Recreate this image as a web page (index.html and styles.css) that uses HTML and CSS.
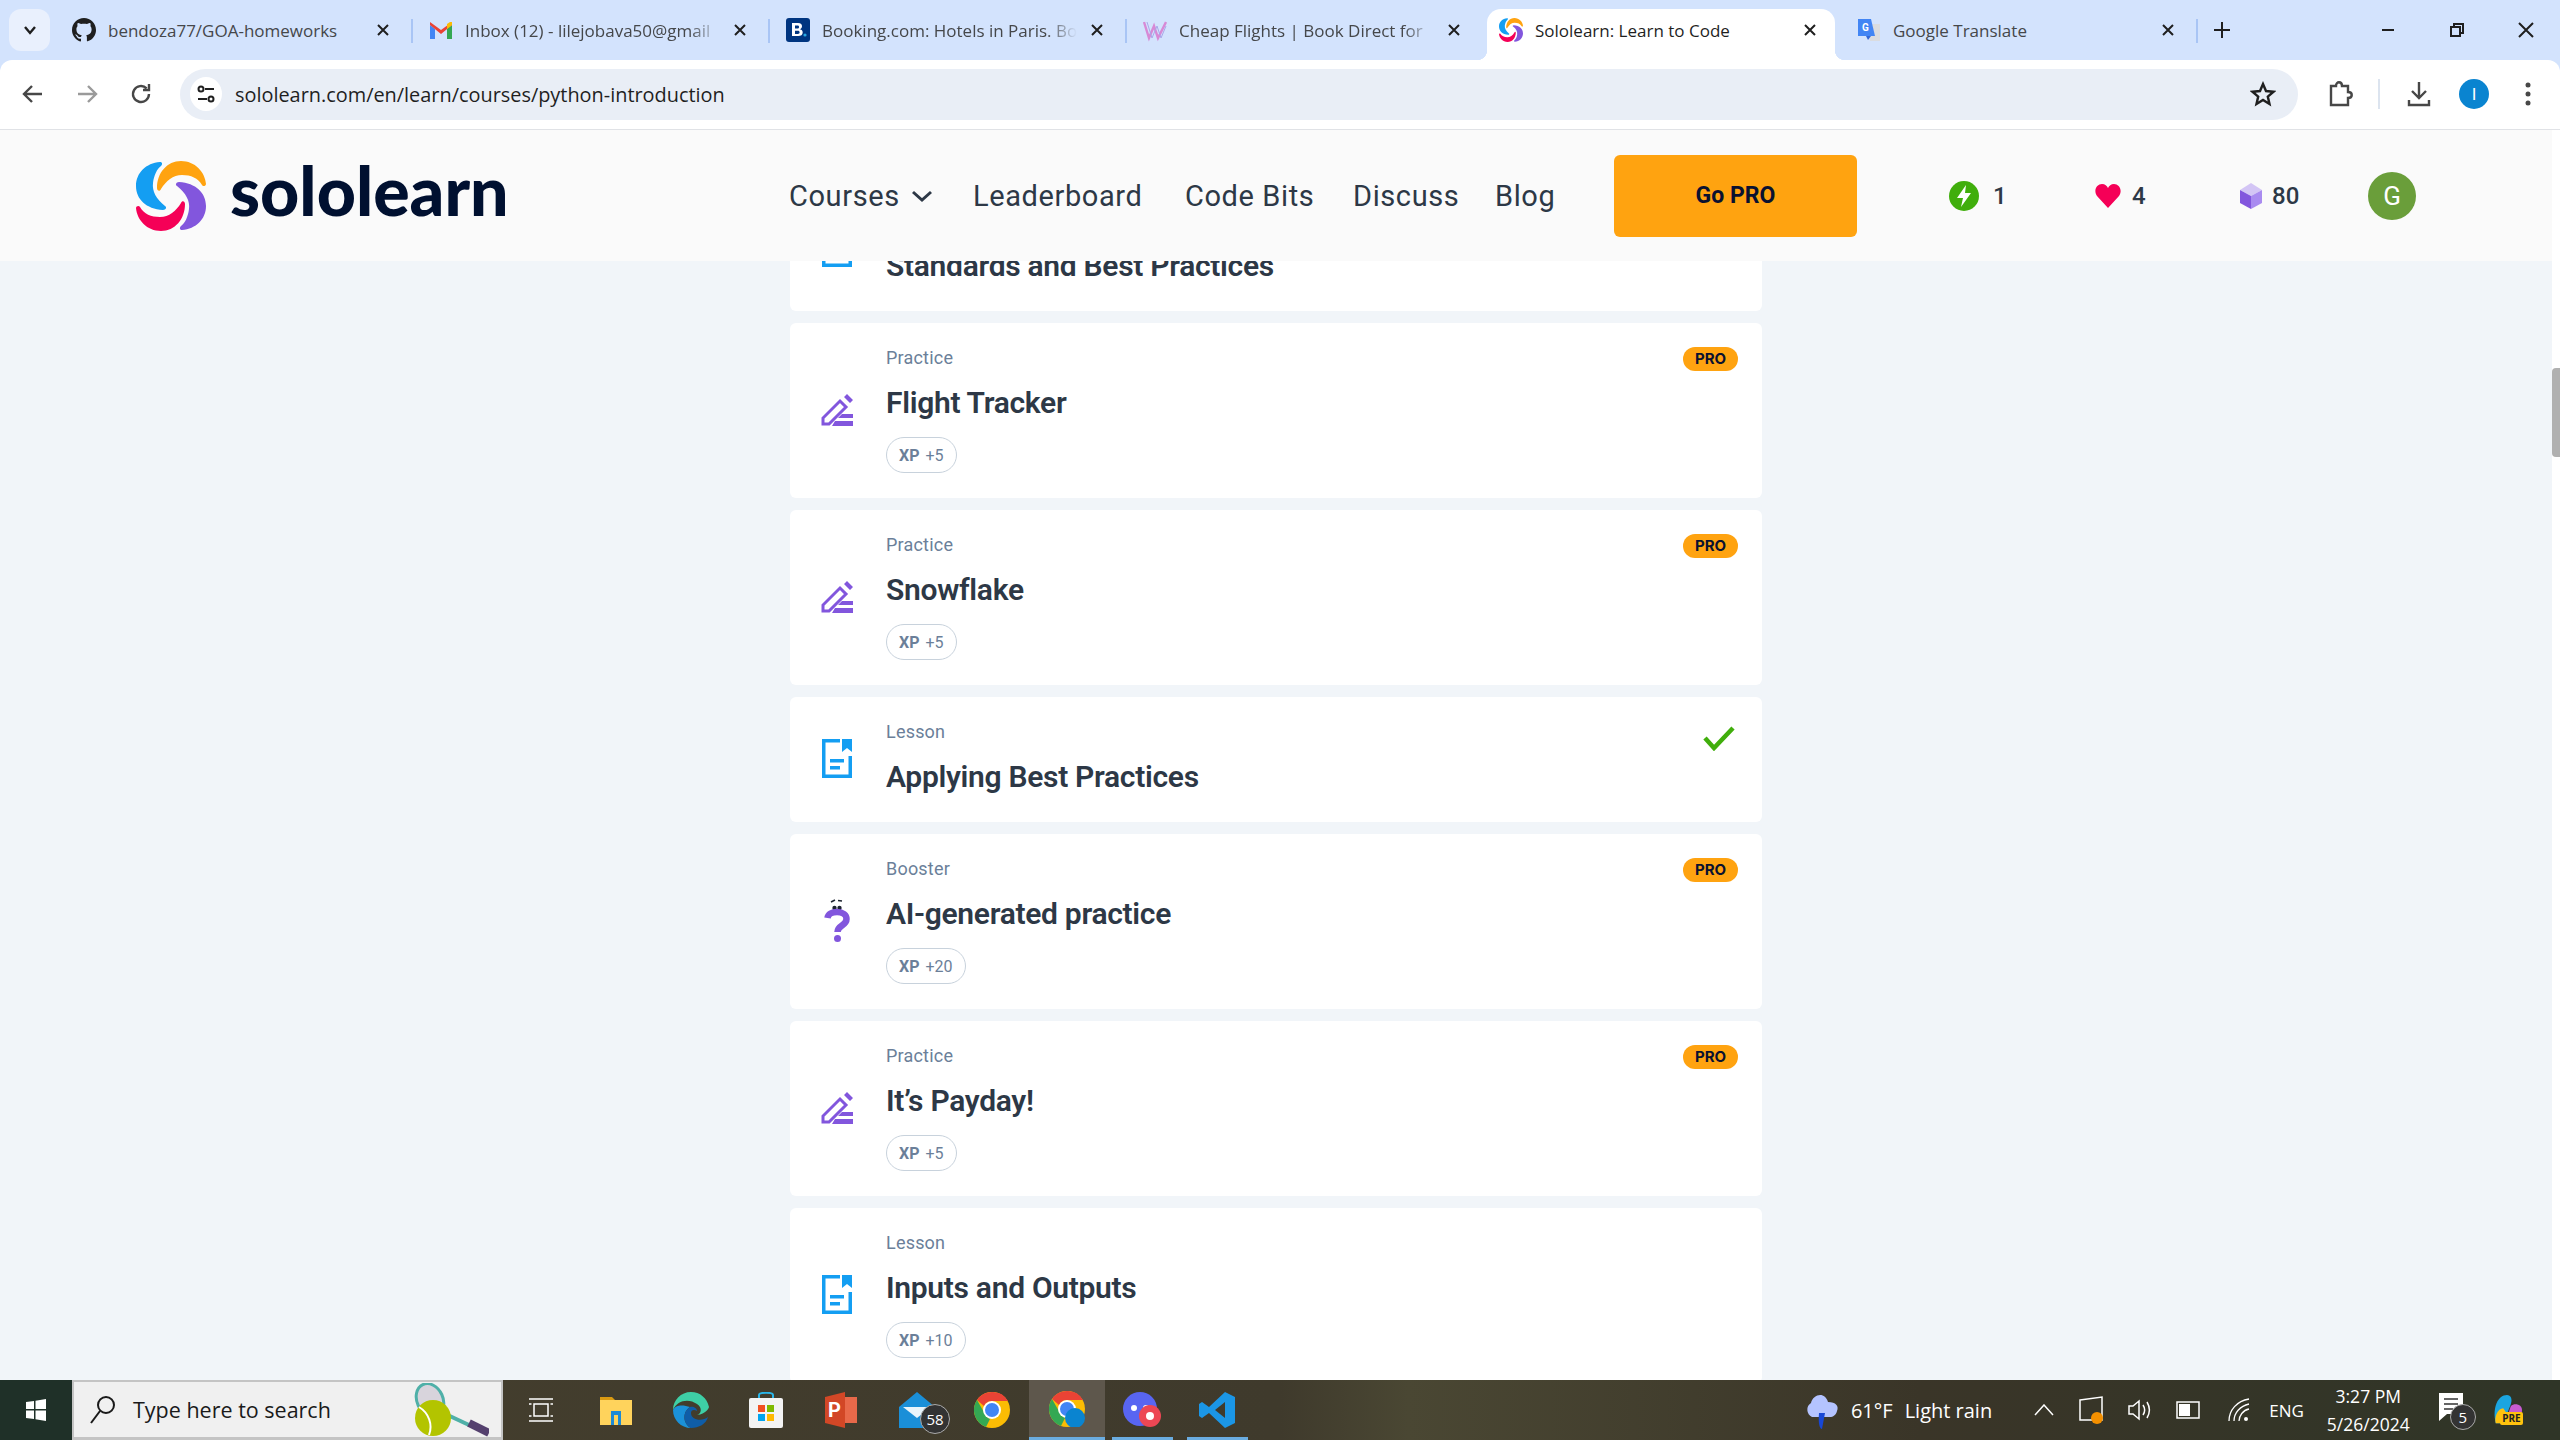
FILE: index.html
```html
<!DOCTYPE html>
<html>
<head>
    <title>Sololearn: Learn to Code</title>
    <link rel="stylesheet" href="styles.css">
</head>
<body>
    <svg class="defs" width="0" height="0">
        <symbol id="logo" viewBox="0 0 70 70">
            <path fill="#149ef2" d="M24 1C10 2 0 12 0 25C0 38 10 48 27 49C30 49 31 46 29 45C20 38 16 30 17 22C18 14 21 8 25 5C27 3 26 1 24 1Z"/>
            <path fill="#ffa310" d="M21 27C21 12 31 0 45 0C59 0 69 11 70 23C70 25 67 26 66 24C62 17 55 14 46 14C37 14 30 20 25 28C24 31 21 30 21 27Z"/>
            <g transform="rotate(180 35 35)">
                <path fill="#8256dd" d="M24 1C10 2 0 12 0 25C0 38 10 48 27 49C30 49 31 46 29 45C20 38 16 30 17 22C18 14 21 8 25 5C27 3 26 1 24 1Z"/>
                <path fill="#f50057" d="M21 27C21 12 31 0 45 0C59 0 69 11 70 23C70 25 67 26 66 24C62 17 55 14 46 14C37 14 30 20 25 28C24 31 21 30 21 27Z"/>
            </g>
        </symbol>
        <symbol id="close" viewBox="0 0 16 16">
            <path d="M3 3L13 13M13 3L3 13" stroke="#1f1f1f" stroke-width="2" fill="none"/>
        </symbol>
        <symbol id="lesson" viewBox="0 0 30 39">
            <path fill="#149ef2" d="M0 0H18V3.500H3.500V35.500H26.500V17H30V39H0Z"/>
            <path fill="#149ef2" d="M20 0H30V13L25 9L20 13Z"/>
            <path fill="#149ef2" d="M8 20H22V23.500H8ZM8 27H18V30.500H8Z"/>
        </symbol>
        <symbol id="pencil" viewBox="0 0 32 32">
            <path fill="none" stroke="#8256dd" stroke-width="3" d="M2 30V24L19 7L25 13L8 30Z"/>
            <path fill="#8256dd" d="M23 3L26 0L32 6L29 9ZM14 27H32V32H11ZM21 20H32V24H17Z"/>
        </symbol>
    </svg>

    <div class="tabstrip">
        <div class="tab-search">
            <svg width="14" height="14" viewBox="0 0 14 14"><path d="M2 4L7 10L12 4" stroke="#1f1f1f" stroke-width="2.400" fill="none"/></svg>
        </div>
        <div class="tab">
            <svg class="tab-icon" viewBox="0 0 24 24"><path fill="#1f1f1f" d="M12 0C5.400 0 0 5.400 0 12c0 5.300 3.400 9.800 8.200 11.400.6.1.8-.3.8-.6v-2.100c-3.300.7-4-1.600-4-1.600-.5-1.400-1.300-1.800-1.300-1.800-1.100-.7.1-.7.1-.7 1.200.1 1.800 1.200 1.800 1.200 1.100 1.800 2.800 1.300 3.500 1 .1-.8.4-1.300.8-1.600-2.700-.3-5.500-1.300-5.500-5.900 0-1.300.5-2.400 1.200-3.200-.1-.3-.5-1.500.1-3.200 0 0 1-.3 3.300 1.200 1-.3 2-.4 3-.4s2 .1 3 .4c2.300-1.500 3.300-1.200 3.300-1.200.6 1.700.2 2.900.1 3.200.8.8 1.200 1.900 1.200 3.200 0 4.600-2.800 5.600-5.500 5.900.4.400.8 1.100.8 2.200v3.300c0 .3.2.7.8.6C20.600 21.800 24 17.300 24 12 24 5.400 18.600 0 12 0Z"/></svg>
            <span class="tab-title">bendoza77/GOA-homeworks</span>
            <svg class="tab-close"><use href="#close"/></svg>
        </div>
        <div class="tab">
            <svg class="tab-icon" viewBox="0 0 24 24">
                <path fill="#4285f4" d="M1 21V7l5 4v10Z"/>
                <path fill="#34a853" d="M18 21V11l5-4v14Z"/>
                <path fill="#ea4335" d="M1 7V4l11 8 11-8v3l-11 9Z"/>
                <path fill="#fbbc04" d="M18 6l3-2 2 0v3l-5 4Z"/>
            </svg>
            <span class="tab-title tab-title-fade">Inbox (12) - lilejobava50@gmail</span>
            <svg class="tab-close"><use href="#close"/></svg>
        </div>
        <div class="tab">
            <svg class="tab-icon" viewBox="0 0 24 24">
                <rect width="24" height="24" rx="3" fill="#003580"/>
                <path fill="#fff" d="M6 5h6c3 0 4 1.500 4 3.300 0 1.500-.8 2.500-2 2.900 1.700.4 2.700 1.500 2.700 3.300 0 2.500-1.800 3.500-4.500 3.500H6Zm3 2.400v3h2.500c1.100 0 1.600-.6 1.600-1.500s-.5-1.500-1.600-1.500Zm0 5.300v3.300h2.800c1.300 0 1.800-.7 1.800-1.700s-.6-1.600-1.800-1.600Z"/>
                <circle cx="19" cy="17" r="1.600" fill="#2aa7e0"/>
            </svg>
            <span class="tab-title tab-title-fade">Booking.com: Hotels in Paris. Bo</span>
            <svg class="tab-close"><use href="#close"/></svg>
        </div>
        <div class="tab tab-before-active">
            <svg class="tab-icon" viewBox="0 0 24 24"><path d="M1 4l5 16 5-12 4 12 8-16" fill="none" stroke="#d78ad6" stroke-width="2.400"/><path d="M4 4l5 16 5-12 4 12 5-12" fill="none" stroke="#a9a7ea" stroke-width="1"/></svg>
            <span class="tab-title tab-title-fade">Cheap Flights | Book Direct for</span>
            <svg class="tab-close"><use href="#close"/></svg>
        </div>
        <div class="tab tab-active">
            <svg class="tab-icon"><use href="#logo"/></svg>
            <span class="tab-title">Sololearn: Learn to Code</span>
            <svg class="tab-close"><use href="#close"/></svg>
        </div>
        <div class="tab">
            <svg class="tab-icon" viewBox="0 0 24 24">
                <path fill="#dadce0" d="M9 6h14v17H13Z"/>
                <path fill="#4285f4" d="M1 1h13l4 17H1Z"/>
                <path fill="#3367d6" d="M9 18h5l-3 4Z"/>
                <text x="5" y="13" class="tab-g">G</text>
            </svg>
            <span class="tab-title">Google Translate</span>
            <svg class="tab-close"><use href="#close"/></svg>
        </div>
        <svg class="tab-plus" viewBox="0 0 18 18"><path d="M9 1V17M1 9H17" stroke="#1f1f1f" stroke-width="2"/></svg>
        <div class="window-btns">
            <div class="window-btn"><svg width="16" height="16" viewBox="0 0 16 16"><path d="M2 8H14" stroke="#1f1f1f" stroke-width="2"/></svg></div>
            <div class="window-btn"><svg width="16" height="16" viewBox="0 0 16 16"><path d="M2 5H11V14H2ZM5 5V2H14V11H11" fill="none" stroke="#1f1f1f" stroke-width="2"/></svg></div>
            <div class="window-btn"><svg width="18" height="18" viewBox="0 0 18 18"><path d="M2 2L16 16M16 2L2 16" stroke="#1f1f1f" stroke-width="2" fill="none"/></svg></div>
        </div>
    </div>

    <div class="toolbar">
        <div class="tool-btn"><svg width="24" height="24" viewBox="0 0 24 24"><path d="M21 12H4M11 4L3 12L11 20" fill="none" stroke="#474747" stroke-width="2.400"/></svg></div>
        <div class="tool-btn"><svg width="24" height="24" viewBox="0 0 24 24"><path d="M3 12H20M13 4L21 12L13 20" fill="none" stroke="#9a9a9a" stroke-width="2.400"/></svg></div>
        <div class="tool-btn"><svg width="24" height="24" viewBox="0 0 24 24"><path d="M20 12A8 8 0 1 1 17.600 6.300M20 2V8H14" fill="none" stroke="#474747" stroke-width="2.400"/></svg></div>
        <div class="omnibox">
            <div class="site-pill"><svg width="20" height="20" viewBox="0 0 20 20"><path d="M9 5H18M2 15H11" stroke="#1f1f1f" stroke-width="2"/><circle cx="5" cy="5" r="2.500" fill="none" stroke="#1f1f1f" stroke-width="2"/><circle cx="15" cy="15" r="2.500" fill="none" stroke="#1f1f1f" stroke-width="2"/></svg></div>
            <span class="url">sololearn.com/en/learn/courses/python-introduction</span>
            <svg class="star" width="26" height="26" viewBox="0 0 26 26"><path d="M13 3L16 10L23.500 10.700L17.800 15.600L19.500 23L13 19L6.500 23L8.200 15.600L2.500 10.700L10 10Z" fill="none" stroke="#1f1f1f" stroke-width="2.400"/></svg>
        </div>
        <div class="tool-right">
            <svg class="tool-ext" width="26" height="28" viewBox="0 0 26 28"><path d="M4 6H9C9 1 15 1 15 6H21V12C26 12 26 18 21 18V25H4Z" fill="none" stroke="#474747" stroke-width="2.400"/></svg>
            <span class="tool-sep"></span>
            <svg class="tool-dl" width="26" height="28" viewBox="0 0 26 28"><path d="M13 2V18M6 11L13 18L20 11M3 20V25H23V20" fill="none" stroke="#474747" stroke-width="2.400"/></svg>
            <span class="profile">I</span>
            <svg class="tool-dots" width="6" height="26" viewBox="0 0 6 26"><circle cx="3" cy="4" r="2.500" fill="#474747"/><circle cx="3" cy="13" r="2.500" fill="#474747"/><circle cx="3" cy="22" r="2.500" fill="#474747"/></svg>
        </div>
    </div>

    <div class="viewport">
        <div class="site">
            <header class="nav">
                <div class="brand">
                    <svg class="brand-logo"><use href="#logo"/></svg>
                    <span class="brand-name">sololearn</span>
                </div>
                <nav class="nav-links">
                    <a class="nav-link">Courses
                        <svg class="nav-caret" width="22" height="14" viewBox="0 0 22 14"><path d="M2 3L11 11L20 3" fill="none" stroke="#2d3846" stroke-width="3"/></svg>
                    </a>
                    <a class="nav-link">Leaderboard</a>
                    <a class="nav-link">Code Bits</a>
                    <a class="nav-link">Discuss</a>
                    <a class="nav-link">Blog</a>
                </nav>
                <button class="go-pro">Go PRO</button>
                <div class="stat stat-streak">
                    <svg width="30" height="30" viewBox="0 0 30 30"><circle cx="15" cy="15" r="15" fill="#40ae0c"/><path d="M17 4L8 17H14L12 26L22 12H16Z" fill="#fff"/></svg>
                    <span>1</span>
                </div>
                <div class="stat stat-hearts">
                    <svg width="26" height="24" viewBox="0 0 26 24"><path d="M13 24L2 12C-2 6 2 0 7 0C10 0 12 2 13 4C14 2 16 0 19 0C24 0 28 6 24 12Z" fill="#f50057"/></svg>
                    <span>4</span>
                </div>
                <div class="stat stat-gems">
                    <svg width="22" height="26" viewBox="0 0 22 26"><path d="M11 0L22 7L11 13L0 7Z" fill="#d3c5f5"/><path d="M0 7L11 13V26L0 20Z" fill="#8256dd"/><path d="M22 7L11 13V26L22 20Z" fill="#a98bf0"/></svg>
                    <span>80</span>
                </div>
                <div class="avatar">G</div>
            </header>

            <main class="page">
                <div class="card-list">
                    <div class="card card-short">
                        <div class="card-icon"><svg width="30" height="39"><use href="#lesson"/></svg></div>
                        <div class="card-body">
                            <div class="card-kind">Lesson</div>
                            <div class="card-title">Standards and Best Practices</div>
                        </div>
                    </div>
                    <div class="card">
                        <div class="card-icon"><svg width="32" height="32"><use href="#pencil"/></svg></div>
                        <div class="card-body">
                            <div class="card-kind">Practice</div>
                            <div class="card-title">Flight Tracker</div>
                            <span class="chip"><b>XP</b> +5</span>
                        </div>
                        <span class="pro-badge">PRO</span>
                    </div>
                    <div class="card">
                        <div class="card-icon"><svg width="32" height="32"><use href="#pencil"/></svg></div>
                        <div class="card-body">
                            <div class="card-kind">Practice</div>
                            <div class="card-title">Snowflake</div>
                            <span class="chip"><b>XP</b> +5</span>
                        </div>
                        <span class="pro-badge">PRO</span>
                    </div>
                    <div class="card card-short">
                        <div class="card-icon"><svg width="30" height="39"><use href="#lesson"/></svg></div>
                        <div class="card-body">
                            <div class="card-kind">Lesson</div>
                            <div class="card-title">Applying Best Practices</div>
                        </div>
                        <svg class="card-check" width="32" height="26" viewBox="0 0 32 26"><path d="M2 13L11 23L30 3" fill="none" stroke="#40ae0c" stroke-width="4.500"/></svg>
                    </div>
                    <div class="card">
                        <div class="card-icon">
                            <svg width="26" height="43" viewBox="0 0 26 43">
                                <path d="M7 3L11 1M14 1.500L18 2" stroke="#1c2430" stroke-width="1.600"/>
                                <circle cx="10.500" cy="9" r="2.200" fill="#1c2430"/><circle cx="15.500" cy="9" r="2.200" fill="#1c2430"/>
                                <path d="M3.500 19C4 15 8 13 13 13C19 13 22.500 16 22.500 20C22.500 27 13.500 26 13.500 33" fill="none" stroke="#8256dd" stroke-width="6.500"/>
                                <circle cx="13.500" cy="39.500" r="3.500" fill="#8256dd"/>
                            </svg>
                        </div>
                        <div class="card-body">
                            <div class="card-kind">Booster</div>
                            <div class="card-title">AI-generated practice</div>
                            <span class="chip"><b>XP</b> +20</span>
                        </div>
                        <span class="pro-badge">PRO</span>
                    </div>
                    <div class="card">
                        <div class="card-icon"><svg width="32" height="32"><use href="#pencil"/></svg></div>
                        <div class="card-body">
                            <div class="card-kind">Practice</div>
                            <div class="card-title">It’s Payday!</div>
                            <span class="chip"><b>XP</b> +5</span>
                        </div>
                        <span class="pro-badge">PRO</span>
                    </div>
                    <div class="card">
                        <div class="card-icon"><svg width="30" height="39"><use href="#lesson"/></svg></div>
                        <div class="card-body">
                            <div class="card-kind">Lesson</div>
                            <div class="card-title">Inputs and Outputs</div>
                            <span class="chip"><b>XP</b> +10</span>
                        </div>
                    </div>
                </div>
            </main>
        </div>
        <div class="scrollbar"><div class="scroll-thumb"></div></div>
    </div>

    <footer class="taskbar">
        <div class="start">
            <svg width="34" height="34" viewBox="0 0 34 34"><path fill="#fff" d="M7 9L15 8V16H7ZM16.500 7.800L27 6V16H16.500ZM7 17.500H15V26L7 25ZM16.500 17.500H27V28L16.500 26.200Z"/></svg>
        </div>
        <div class="task-search">
            <svg width="30" height="32" viewBox="0 0 30 32"><circle cx="18" cy="11" r="8" fill="none" stroke="#1a1a1a" stroke-width="2"/><path d="M12 17L3 29" stroke="#1a1a1a" stroke-width="2"/></svg>
            <span class="search-text">Type here to search</span>
            <svg class="search-doodle" width="84" height="54" viewBox="0 0 84 54">
                <ellipse cx="25" cy="17" rx="13" ry="17" fill="#d8d4dc" stroke="#4fb0a8" stroke-width="3" transform="rotate(-25 25 17)"/>
                <path d="M34 28L64 42" stroke="#4fb0a8" stroke-width="4"/>
                <path d="M64 40L84 50" stroke="#54406e" stroke-width="8"/>
                <circle cx="28" cy="35" r="18" fill="#b3c400"/>
                <path d="M14 24C24 30 28 42 24 52" fill="none" stroke="#fff" stroke-width="2"/>
            </svg>
        </div>
        <div class="task-icons">
            <div class="task-item">
                <svg width="24" height="24" viewBox="0 0 24 24"><path d="M0 1H24M0 23H24M5 6H19V18H5ZM0 6H2.500M0 18H2.500M21.500 6H24M21.500 18H24" fill="none" stroke="#fff" stroke-width="1.500"/></svg>
            </div>
            <div class="task-item">
                <svg width="32" height="32" viewBox="0 0 32 32"><path d="M0 3H12L15 6H0Z" fill="#d99a12"/><path d="M0 6H32V31H0Z" fill="#ffd35c"/><path d="M11 31V17H21V31H18V21H14V31Z" fill="#1c8ad6"/></svg>
            </div>
            <div class="task-item">
                <svg width="36" height="36" viewBox="0 0 36 36"><path d="M18 0C8 0 0 8 0 18C4 8 16 6 24 12C30 16 28 22 24 23C33 22 36 16 36 15C34 6 27 0 18 0Z" fill="#3ecfa6"/><path d="M0 18C0 28 8 36 18 36C10 32 9 20 17 15C11 13 3 12 0 18Z" fill="#1b91d9"/><path d="M17 15C9 20 10 32 18 36C26 36 33 32 35 25C29 30 18 28 18 21C18 18 21 17 24 19C24 16 20 14 17 15Z" fill="#0f5da8"/></svg>
            </div>
            <div class="task-item">
                <svg width="34" height="36" viewBox="0 0 34 36"><path d="M10 7V3C10 0 24 0 24 3V7" fill="none" stroke="#2ab5e8" stroke-width="2"/><rect y="6" width="34" height="30" rx="2" fill="#f3f3f3"/><rect x="9" y="13" width="7" height="7" fill="#f25022"/><rect x="18" y="13" width="7" height="7" fill="#7fba00"/><rect x="9" y="22" width="7" height="7" fill="#00a4ef"/><rect x="18" y="22" width="7" height="7" fill="#ffb900"/></svg>
            </div>
            <div class="task-item">
                <svg width="32" height="36" viewBox="0 0 32 36"><path d="M0 5L20 0V36L0 31Z" fill="#d24726"/><path d="M20 5H32V31H20Z" fill="#e8694a"/><text x="3" y="25" class="ppt-p">P</text></svg>
            </div>
            <div class="task-item task-item-badge">
                <svg width="36" height="36" viewBox="0 0 36 36"><path d="M18 0L36 15V36H0V15Z" fill="#1a8fd8"/><path d="M4 15H32L18 26Z" fill="#e8f4fb"/></svg>
                <span class="task-count">58</span>
            </div>
            <div class="task-item">
                <svg width="36" height="36" viewBox="0 0 36 36"><circle cx="18" cy="18" r="18" fill="#fbbc04"/><path d="M18 0A18 18 0 0 1 34 9H18A9 9 0 0 0 10 14L3 8A18 18 0 0 1 18 0Z" fill="#ea4335"/><path d="M3 8L11 22A9 9 0 0 0 16 27L12 35A18 18 0 0 1 3 8Z" fill="#34a853"/><circle cx="18" cy="18" r="9" fill="#fff"/><circle cx="18" cy="18" r="7" fill="#4285f4"/></svg>
            </div>
            <div class="task-item task-item-active">
                <svg width="36" height="36" viewBox="0 0 36 36"><circle cx="18" cy="18" r="18" fill="#fbbc04"/><path d="M18 0A18 18 0 0 1 34 9H18A9 9 0 0 0 10 14L3 8A18 18 0 0 1 18 0Z" fill="#ea4335"/><path d="M3 8L11 22A9 9 0 0 0 16 27L12 35A18 18 0 0 1 3 8Z" fill="#34a853"/><circle cx="18" cy="18" r="9" fill="#fff"/><circle cx="18" cy="18" r="7" fill="#4285f4"/><circle cx="26" cy="27" r="10" fill="#0a84d0"/></svg>
            </div>
            <div class="task-item task-item-open">
                <svg width="38" height="36" viewBox="0 0 38 36"><circle cx="17" cy="17" r="17" fill="#5865f2"/><circle cx="11" cy="16" r="3" fill="#fff"/><circle cx="23" cy="16" r="3" fill="#fff"/><circle cx="27" cy="24" r="11" fill="#ed4754"/><circle cx="27" cy="24" r="4" fill="#fff"/></svg>
            </div>
            <div class="task-item task-item-open">
                <svg width="36" height="36" viewBox="0 0 36 36"><path d="M26 0L36 5V31L26 36L10 21L3 26L0 24V12L3 10L10 15ZM26 10L16 18L26 26Z" fill="#1b96e6"/></svg>
            </div>
        </div>
        <div class="tray">
            <svg class="tray-weather" width="36" height="38" viewBox="0 0 36 38"><path d="M9 26A8 8 0 0 1 8 12C10 3 22 0 25 11C33 11 36 15 34 20C33 24 30 26 27 26Z" fill="#b4c3ff"/><path d="M16 22H22L19 38C17 38 15 34 16 22Z" fill="#1747d6"/></svg>
            <span class="tray-temp">61°F</span>
            <span class="tray-weather-text">Light rain</span>
            <svg class="tray-chevron" width="20" height="12" viewBox="0 0 20 12"><path d="M1 11L10 1L19 11" fill="none" stroke="#fff" stroke-width="1.500"/></svg>
            <svg class="tray-sync" width="26" height="28" viewBox="0 0 26 28"><path d="M2 4L24 1V24H2Z" fill="none" stroke="#fff" stroke-width="1.500"/><circle cx="19" cy="22" r="6" fill="#f59000"/></svg>
            <svg class="tray-sound" width="24" height="24" viewBox="0 0 24 24"><path d="M1 8H5L11 3V21L5 16H1ZM15 7C17 10 17 14 15 17M19 4C22 9 22 15 19 20" fill="none" stroke="#fff" stroke-width="1.500"/></svg>
            <svg class="tray-battery" width="24" height="18" viewBox="0 0 24 18"><rect x="1" y="1" width="22" height="16" fill="none" stroke="#fff" stroke-width="1.500"/><rect x="3" y="3" width="11" height="12" fill="#fff"/></svg>
            <svg class="tray-wifi" width="22" height="24" viewBox="0 0 22 24"><path d="M1 23C1 12 9 3 21 1M6 23C6 15 12 8 21 6M11 23C11 18 15 12 21 11" fill="none" stroke="#fff" stroke-width="1.300"/><circle cx="18" cy="21" r="2" fill="#fff"/></svg>
            <span class="tray-lang">ENG</span>
            <div class="tray-clock"><span>3:27 PM</span><span>5/26/2024</span></div>
            <div class="tray-note">
                <svg width="24" height="28" viewBox="0 0 24 28"><path d="M0 0H24V21H8L0 28Z" fill="#fff"/><path d="M5 6H19M5 11H19M5 16H14" stroke="#333" stroke-width="1.500"/></svg>
                <span class="note-count">5</span>
            </div>
            <div class="tray-copilot">
                <svg width="32" height="30" viewBox="0 0 32 32"><path d="M4 30C0 14 6 0 16 0C20 0 22 4 20 10L12 30Z" fill="#1ba5e0"/><path d="M4 30C2 24 6 14 12 14L16 20L12 30Z" fill="#ffc20e"/><path d="M14 30L20 12C24 8 32 10 32 16C32 24 28 30 22 30Z" fill="#c75bd1"/></svg>
                <span class="copilot-tag">PRE</span>
            </div>
        </div>
    </footer>
</body>
</html>
```

FILE: styles.css
```css
* {
    box-sizing: border-box;
}

html, body {
    height: 100%;
}

body {
    margin: 0;
    display: flex;
    flex-direction: column;
    overflow: hidden;
    font-family: "Roboto", "Liberation Sans", sans-serif;
    background-color: #d3e3fd;
}

.defs {
    position: absolute;
}

/* browser tabs */

.tabstrip {
    height: 60px;
    flex: none;
    display: flex;
    align-items: flex-end;
    padding-left: 9px;
    background-color: #d3e3fd;
    font-family: "Open Sans", sans-serif;
    font-size: 17px;
    color: #45474a;
}

.tab-search {
    width: 41px;
    height: 42px;
    margin-bottom: 9px;
    margin-right: 8px;
    border-radius: 12px;
    background-color: #e9f0fd;
    display: flex;
    align-items: center;
    justify-content: center;
}

.tab {
    width: 357px;
    height: 51px;
    flex: none;
    display: flex;
    align-items: center;
    padding-left: 14px;
    padding-bottom: 9px;
    position: relative;
}

.tab::after {
    content: "";
    position: absolute;
    right: 2px;
    top: 10px;
    height: 24px;
    width: 2px;
    background-color: #a9c5f5;
}

.tab-before-active::after {
    display: none;
}

.tab-active {
    width: 348px;
    margin-left: 1px;
    margin-right: 8px;
    padding-left: 12px;
    background-color: #fff;
    border-radius: 14px 14px 0 0;
    color: #1f1f1f;
}

/* curved feet of the open tab */
.tab-active::before,
.tab-active::after {
    content: "";
    position: absolute;
    top: auto;
    bottom: 0;
    width: 10px;
    height: 10px;
}

.tab-active::before {
    left: -10px;
    background: radial-gradient(circle at 0 0, transparent 10px, #fff 10.5px);
}

.tab-active::after {
    right: -10px;
    background: radial-gradient(circle at 100% 0, transparent 10px, #fff 10.5px);
}

.tab-icon {
    width: 24px;
    height: 24px;
    flex: none;
    margin-right: 12px;
}

.tab-g {
    font-family: "Roboto", sans-serif;
    font-size: 10px;
    font-weight: 700;
    fill: #fff;
}

.tab-title {
    width: 255px;
    flex: none;
    overflow: hidden;
    white-space: nowrap;
}

.tab-title-fade {
    -webkit-mask-image: linear-gradient(to right, #000 88%, transparent);
    mask-image: linear-gradient(to right, #000 88%, transparent);
}

.tab-close {
    width: 16px;
    height: 16px;
    flex: none;
    margin-left: 12px;
}

.tab-plus {
    width: 18px;
    height: 18px;
    margin-left: 13px;
    margin-bottom: 21px;
}

.window-btns {
    margin-left: auto;
    display: flex;
    align-self: stretch;
}

.window-btn {
    width: 69px;
    display: flex;
    align-items: center;
    justify-content: center;
}

/* browser toolbar */

.toolbar {
    height: 70px;
    flex: none;
    display: flex;
    align-items: center;
    padding: 0 0 1px 6px;
    background-color: #fff;
    border-bottom: 1px solid #e0e2e6;
    border-radius: 12px 12px 0 0;
}

.tool-btn {
    width: 54px;
    display: flex;
    justify-content: center;
}

.omnibox {
    width: 2118px;
    height: 51px;
    margin-left: 12px;
    border-radius: 26px;
    background-color: #e9eef6;
    display: flex;
    align-items: center;
    padding-left: 10px;
    padding-right: 22px;
}

.site-pill {
    width: 32px;
    height: 34px;
    border-radius: 50%;
    background-color: #fff;
    display: flex;
    align-items: center;
    justify-content: center;
}

.url {
    margin-left: 13px;
    font-family: "Open Sans", sans-serif;
    font-size: 19.9px;
    color: #1f1f1f;
}

.star {
    margin-left: auto;
}

.tool-right {
    flex: 1;
    display: flex;
    align-items: center;
    padding-left: 29px;
}

.tool-sep {
    width: 2px;
    height: 30px;
    margin-left: 25px;
    background-color: #dce4ef;
}

.tool-dl {
    margin-left: 26px;
}

.profile {
    width: 30px;
    height: 30px;
    margin-left: 27px;
    border-radius: 50%;
    background-color: #0a84d0;
    color: #fff;
    font-size: 17px;
    display: flex;
    align-items: center;
    justify-content: center;
}

.tool-dots {
    margin-left: 36px;
}

/* site */

.viewport {
    flex: 1;
    min-height: 0;
    display: flex;
}

.site {
    flex: 1;
    min-width: 0;
    display: flex;
    flex-direction: column;
    background-color: #f1f5f9;
}

.nav {
    height: 131px;
    flex: none;
    display: flex;
    align-items: center;
    padding-left: 135px;
    background-color: #fafafa;
    position: relative;
    z-index: 1;
}

.brand {
    width: 654px;
    display: flex;
    align-items: center;
}

.brand-logo {
    width: 70px;
    height: 70px;
    margin-left: 1px;
}

.brand-name {
    margin-left: 24px;
    margin-top: -11px;
    font-family: "Lato", sans-serif;
    font-size: 68px;
    font-weight: 900;
    color: #001030;
    line-height: 1;
}

.nav-links {
    width: 825px;
    display: grid;
    grid-template-columns: 184px 212px 168px 142px 1fr;
}

.nav-link {
    display: flex;
    align-items: center;
    gap: 11px;
    font-size: 29px;
    letter-spacing: 0.6px;
    color: #2d3846;
}

.go-pro {
    width: 243px;
    height: 82px;
    border: none;
    border-radius: 6px;
    background-color: #ffa310;
    font-family: "Roboto", sans-serif;
    font-size: 23px;
    font-weight: 700;
    color: #0a1130;
}

.stat {
    display: flex;
    align-items: center;
    font-size: 24px;
    font-weight: 500;
    color: #2d3846;
}

.stat span {
    margin-left: 14px;
}

.stat-streak {
    margin-left: 92px;
    width: 146px;
}

.stat-hearts {
    width: 145px;
}

.stat-hearts span {
    margin-left: 11px;
}

.stat-gems {
    width: 128px;
}

.stat-gems span {
    margin-left: 10px;
}

.avatar {
    width: 48px;
    height: 48px;
    border-radius: 50%;
    background-color: #6a9e3a;
    color: #fff;
    font-size: 26px;
    display: flex;
    align-items: center;
    justify-content: center;
}

.page {
    flex: 1;
    min-height: 0;
    overflow: hidden;
}

.card-list {
    width: 972px;
    margin: -75px auto 0;
    display: flex;
    flex-direction: column;
    gap: 12px;
}

.card {
    position: relative;
    display: flex;
    align-items: center;
    padding: 22px 24px 24px 31px;
    background-color: #fff;
    border-radius: 6px;
}

.card-icon {
    width: 32px;
    margin-right: 33px;
    display: flex;
    justify-content: center;
}

.card-kind {
    font-size: 18px;
    line-height: 26px;
    letter-spacing: 0.2px;
    color: #6b7f99;
}

.card-title {
    margin-top: 11px;
    font-size: 30px;
    font-weight: 600;
    line-height: 42px;
    letter-spacing: -0.3px;
    color: #2d3846;
}

.chip {
    display: inline-flex;
    align-items: center;
    gap: 6px;
    height: 36px;
    margin-top: 13px;
    margin-bottom: 1px;
    padding: 0 12px;
    border: 1px solid #c8d2dc;
    border-radius: 18px;
    font-size: 16px;
    color: #6b7f99;
}

.pro-badge {
    position: absolute;
    top: 24px;
    right: 24px;
    width: 55px;
    height: 24px;
    border-radius: 12px;
    background-color: #ffa310;
    font-family: "Inter", sans-serif;
    font-size: 15px;
    font-weight: 700;
    line-height: 24px;
    text-align: center;
    color: #0a1130;
}

.card-check {
    position: absolute;
    top: 28px;
    right: 27px;
}

.scrollbar {
    width: 8px;
    flex: none;
    background-color: #fff;
}

.scroll-thumb {
    height: 89px;
    margin-top: 238px;
    background-color: #b0b0b0;
    border-radius: 4px 0 0 4px;
}

/* windows taskbar */

.taskbar {
    height: 60px;
    flex: none;
    display: flex;
    background: linear-gradient(to right, #453f2e 0%, #3f3a2c 50%, #4a4733 55%, #3a3528 75%, #2f3527 100%);
    color: #fff;
    font-family: "Open Sans", sans-serif;
}

.start {
    width: 72px;
    background-color: #1f3028;
    display: flex;
    align-items: center;
    justify-content: center;
}

.task-search {
    width: 431px;
    position: relative;
    display: flex;
    align-items: center;
    padding-left: 14px;
    background-color: #f0f0f0;
    border: 2px solid #c4c4c4;
    border-bottom-width: 3px;
    color: #1a1a1a;
}

.search-text {
    margin-left: 15px;
    font-size: 21.5px;
}

.search-doodle {
    position: absolute;
    right: 12px;
    bottom: 0;
}

.task-icons {
    display: flex;
}

.task-item {
    width: 75.2px;
    position: relative;
    display: flex;
    align-items: center;
    justify-content: center;
}

.task-item-active {
    background-color: #5e574c;
    border-bottom: 3px solid #6aace0;
}

.task-item-open::after {
    content: "";
    position: absolute;
    left: 7px;
    right: 7px;
    bottom: 0;
    height: 3px;
    background-color: #6aace0;
}

.task-count {
    position: absolute;
    right: 4px;
    bottom: 6px;
    width: 30px;
    height: 30px;
    border: 1px solid #aaa;
    border-radius: 50%;
    background-color: #333;
    font-size: 15px;
    line-height: 28px;
    text-align: center;
}

.ppt-p {
    font-family: "Roboto", sans-serif;
    font-size: 20px;
    font-weight: 700;
    fill: #fff;
}

.tray {
    flex: 1;
    display: flex;
    align-items: center;
    font-size: 20px;
    padding-left: 548px;
}

.tray-temp {
    margin-left: 12px;
}

.tray-weather-text {
    margin-left: 12px;
}

.tray-chevron {
    margin-left: 42px;
}

.tray-sync {
    margin-left: 24px;
}

.tray-sound {
    margin-left: 24px;
}

.tray-battery {
    margin-left: 24px;
}

.tray-wifi {
    margin-left: 28px;
}

.tray-lang {
    margin-left: 19px;
    font-size: 17px;
}

.tray-clock {
    margin-left: 23px;
    display: flex;
    flex-direction: column;
    align-items: center;
    gap: 8px;
    font-size: 17.5px;
    line-height: 20px;
}

.tray-note {
    position: relative;
    margin-left: 29px;
    margin-top: -6px;
    display: flex;
}

.note-count {
    position: absolute;
    left: 11px;
    top: 11px;
    width: 26px;
    height: 26px;
    border: 1px solid #aaa;
    border-radius: 50%;
    background-color: #333;
    font-size: 15px;
    line-height: 24px;
    text-align: center;
}

.tray-copilot {
    position: relative;
    margin-left: 28px;
    display: flex;
}

.copilot-tag {
    position: absolute;
    right: 0;
    bottom: 0;
    padding: 0 2px;
    background-color: #ffc20e;
    border-radius: 2px;
    font-size: 10px;
    font-weight: 700;
    line-height: 13px;
    color: #222;
}
```
